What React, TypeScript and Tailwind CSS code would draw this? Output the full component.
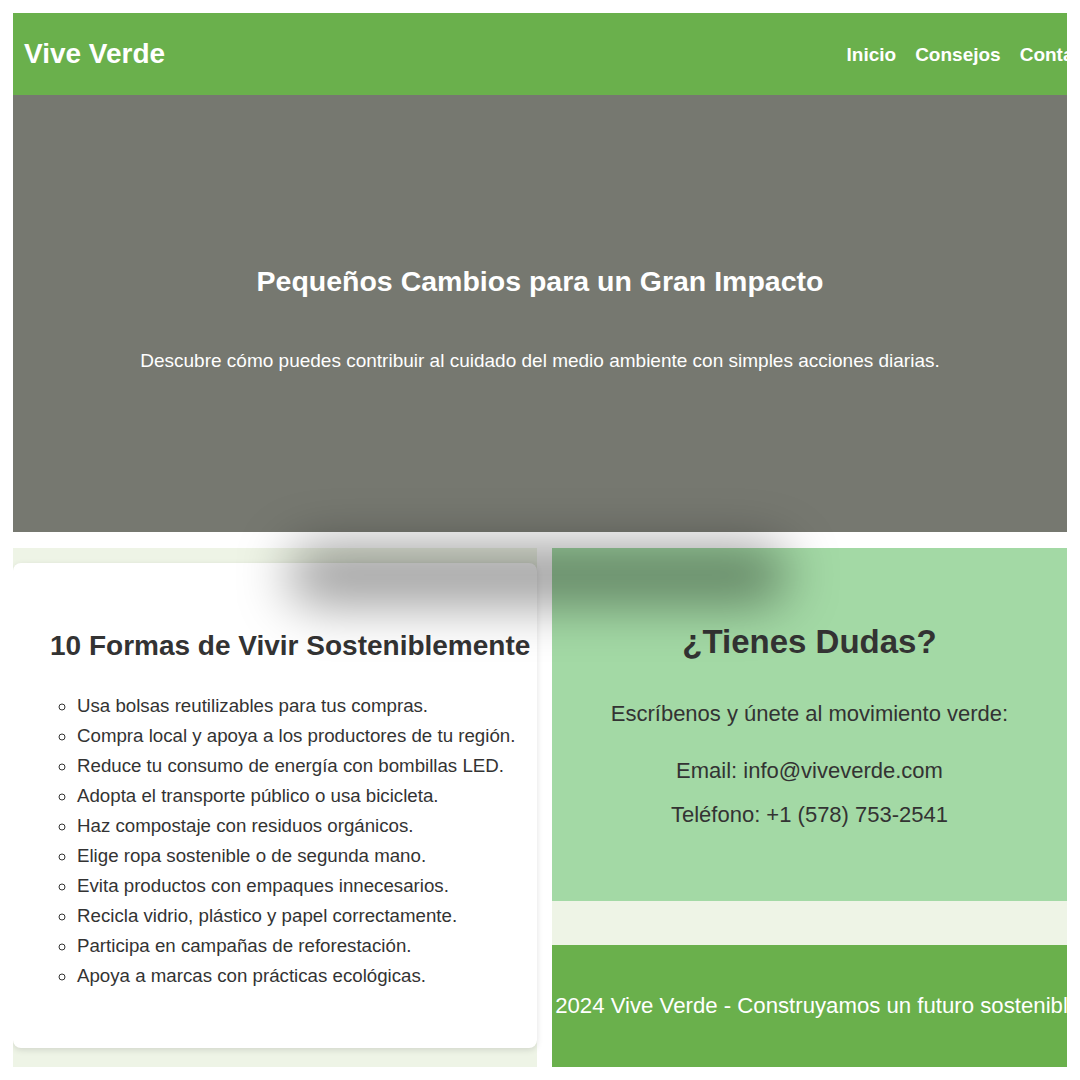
import React from "react";

const tips = [
  "Usa bolsas reutilizables para tus compras.",
  "Compra local y apoya a los productores de tu región.",
  "Reduce tu consumo de energía con bombillas LED.",
  "Adopta el transporte público o usa bicicleta.",
  "Haz compostaje con residuos orgánicos.",
  "Elige ropa sostenible o de segunda mano.",
  "Evita productos con empaques innecesarios.",
  "Recicla vidrio, plástico y papel correctamente.",
  "Participa en campañas de reforestación.",
  "Apoya a marcas con prácticas ecológicas.",
];

export default function App() {
  return (
    <div
      className="w-[1080px] h-[1080px] bg-white p-[13px]"
      style={{ fontFamily: '"Liberation Sans", Arial, sans-serif' }}
    >
      <div className="relative w-[1054px] h-[1054px] overflow-hidden">
        <header className="w-[1100px] h-[82px] bg-[#6ab04c] flex items-center justify-between px-[11px] text-white font-bold">
          <div className="text-[28px] leading-none">Vive Verde</div>
          <nav className="flex gap-[19px] text-[19px] leading-none">
            <span>Inicio</span>
            <span>Consejos</span>
            <span>Contacto</span>
          </nav>
        </header>

        <section className="h-[437px] bg-[#767870] flex flex-col items-center justify-center text-white">
          <h1 className="text-[28.5px] leading-[34px] font-bold mt-[12px]">
            Pequeños Cambios para un Gran Impacto
          </h1>
          <p className="text-[19px] leading-[28px] mt-[49px]">
            Descubre cómo puedes contribuir al cuidado del medio ambiente con simples acciones diarias.
          </p>
        </section>

        <div className="flex gap-[15px] mt-[16px] text-[#333]">
          <main className="w-[524px] shrink-0 h-[519px] bg-[#eef4e6] pt-[15px]">
            <div className="h-[485px] bg-white rounded-[8px] shadow-[0_2px_6px_rgba(0,0,0,0.12)] pl-[37px] pt-[66px]">
              <h2 className="text-[28px] leading-[34px] font-bold whitespace-nowrap">
                10 Formas de Vivir Sosteniblemente
              </h2>
              <ul className="list-[circle] pl-[27px] mt-[28px] text-[18.7px] leading-[30px]">
                {tips.map((t) => (
                  <li key={t}>{t}</li>
                ))}
              </ul>
            </div>
          </main>

          <aside className="flex-1 min-w-0 h-[519px] bg-[#eef4e6] flex flex-col">
            <div className="h-[353px] bg-[#a3d9a5] flex flex-col items-center pt-[74px] text-[22px]">
              <h2 className="text-[33px] leading-[40px] font-bold">¿Tienes Dudas?</h2>
              <p className="leading-[30px] mt-[37px]">Escríbenos y únete al movimiento verde:</p>
              <p className="leading-[30px] mt-[27px]">Email: info@viveverde.com</p>
              <p className="leading-[30px] mt-[14px]">Teléfono: +1 (578) 753-2541</p>
            </div>
            <footer className="mt-[44px] flex-1 min-w-0 bg-[#6ab04c] flex items-center justify-center overflow-hidden text-white">
              <p className="shrink-0 text-[22.2px] leading-[30px] whitespace-nowrap">
                © 2024 Vive Verde - Construyamos un futuro sostenible.
              </p>
            </footer>
          </aside>
        </div>

        <div className="pointer-events-none absolute left-[275px] top-[533px] w-[500px] h-[58px] rounded-full bg-black/40 blur-[26px]" />
      </div>
    </div>
  );
}
